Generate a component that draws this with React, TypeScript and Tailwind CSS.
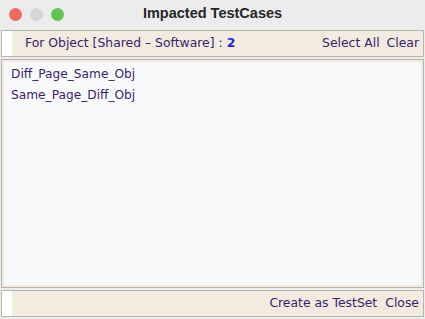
import React from "react";

export default function App() {
  const font = { fontFamily: '"DejaVu Sans", "Liberation Sans", sans-serif' };
  return (
    <div className="w-[425px] h-[319px] bg-[#ececec] flex flex-col overflow-hidden" style={font}>
      <div className="h-[29px] relative flex items-center justify-center shrink-0">
        <div className="absolute left-[9px] top-[8px] flex gap-[8px]">
          <span className="w-[13px] h-[13px] rounded-full bg-[#ed6a5e]" />
          <span className="w-[13px] h-[13px] rounded-full bg-[#d6d6d6]" />
          <span className="w-[13px] h-[13px] rounded-full bg-[#61c554]" />
        </div>
        <span className="text-[14.5px] font-bold text-[#262626] -mt-[1px]" style={{ fontFamily: '"Liberation Sans", sans-serif' }}>Impacted TestCases</span>
      </div>
      <div className="mx-[1px] mt-[1px] h-[27px] border border-[#b8b4ac] bg-white flex shrink-0">
        <div className="w-[10px]" />
        <div className="flex-1 bg-[#f2ebdf] flex items-center text-[12.4px] text-[#3b1d6e] pl-[13px] pr-[4px]">
          <span>For Object [Shared – Software] : </span>
          <span className="ml-[4px] font-bold text-[#1f23f0]">2</span>
          <span className="ml-auto">Select All</span>
          <span className="ml-[7px]">Clear</span>
        </div>
      </div>
      <div className="mx-[1px] mt-[2px] h-[229px] border border-[#b8b4ac] bg-[#f2ebdf] p-[2px] shrink-0">
        <div className="w-full h-full bg-[#f8f9fb] pl-[7px] pt-[2px] text-[12.2px] text-[#3b1d6e] leading-[21px]">
          <div>Diff_Page_Same_Obj</div>
          <div>Same_Page_Diff_Obj</div>
        </div>
      </div>
      <div className="mx-[1px] mt-[2px] h-[27px] border border-[#b8b4ac] bg-white flex shrink-0">
        <div className="w-[10px]" />
        <div className="flex-1 bg-[#f2ebdf] flex items-center justify-end text-[12.4px] text-[#3b1d6e] pr-[4px]">
          <span>Create as TestSet</span>
          <span className="ml-[8px]">Close</span>
        </div>
      </div>
    </div>
  );
}
